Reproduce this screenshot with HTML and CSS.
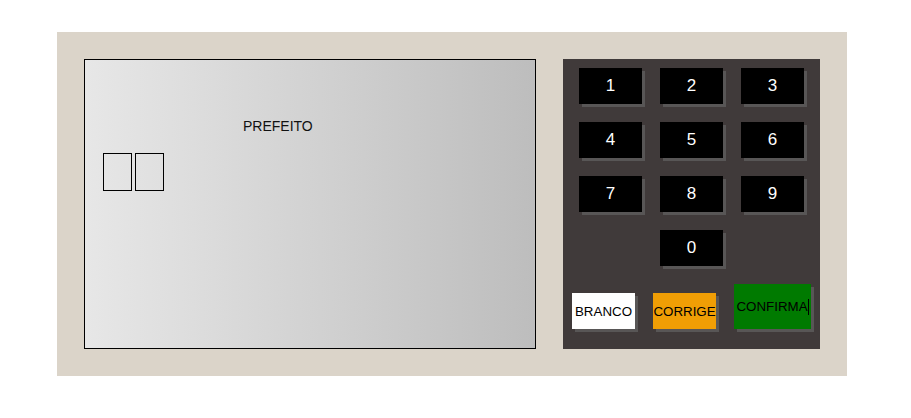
FILE: index.html
```html
<!DOCTYPE html>
<html>
<head>
<meta charset="utf-8">
<link rel="stylesheet" href="styles.css">
</head>
<body>
<div class="urna">
  <div class="tela">
    <div class="cargo">PREFEITO</div>
    <div class="digitos">
      <div class="digito"></div>
      <div class="digito"></div>
    </div>
  </div>
  <div class="teclado">
    <div class="numeros">
      <div class="tecla">1</div>
      <div class="tecla">2</div>
      <div class="tecla">3</div>
      <div class="tecla">4</div>
      <div class="tecla">5</div>
      <div class="tecla">6</div>
      <div class="tecla">7</div>
      <div class="tecla">8</div>
      <div class="tecla">9</div>
      <div class="tecla zero">0</div>
    </div>
    <div class="acoes">
      <div class="acao branco">BRANCO</div>
      <div class="acao corrige">CORRIGE</div>
      <div class="acao confirma">CONFIRMA<span class="caret"></span></div>
    </div>
  </div>
</div>
</body>
</html>
```
FILE: styles.css
```css
html, body {
  margin: 0;
  padding: 0;
  background: #ffffff;
}
body {
  padding: 32px 0 0 57px;
  font-family: "Liberation Sans", Arial, sans-serif;
}
.urna {
  width: 736px;
  height: 290px;
  padding: 27px;
  background: #dbd4c9;
  display: flex;
  gap: 27px;
}
.tela {
  width: 450px;
  height: 288px;
  border: 1px solid #000;
  background: linear-gradient(to right, #e7e7e7, #bdbdbd);
}
.cargo {
  margin: 58px 0 0 158px;
  font-size: 14px;
  line-height: 16px;
  color: #111;
}
.digitos {
  display: flex;
  gap: 3px;
  margin: 19px 0 0 18px;
}
.digito {
  width: 27px;
  height: 36px;
  border: 1px solid #000;
}
.teclado {
  width: 257px;
  height: 290px;
  background: #403a3a;
  display: flex;
  flex-direction: column;
}
.numeros {
  display: grid;
  grid-template-columns: repeat(3, 63px);
  grid-auto-rows: 36px;
  column-gap: 18px;
  row-gap: 18px;
  padding: 9px 0 0 16px;
}
.tecla {
  background: #000;
  color: #fff;
  font-size: 17px;
  display: flex;
  align-items: center;
  justify-content: center;
  box-shadow: 3px 3px 0 #585656;
}
.zero {
  grid-column: 2;
}
.acoes {
  display: flex;
  align-items: flex-end;
  gap: 18px;
  padding: 18px 0 0 9px;
}
.acao {
  width: 63px;
  height: 36px;
  font-size: 13.333px;
  color: #000;
  display: flex;
  align-items: center;
  justify-content: center;
  white-space: nowrap;
  box-shadow: 3px 3px 0 #585656;
}
.branco {
  background: #fff;
}
.corrige {
  background: #f09e05;
}
.confirma {
  width: 77px;
  height: 45px;
  background: #007a00;
}
.caret {
  display: inline-block;
  width: 1px;
  height: 16px;
  background: #000;
}
```
